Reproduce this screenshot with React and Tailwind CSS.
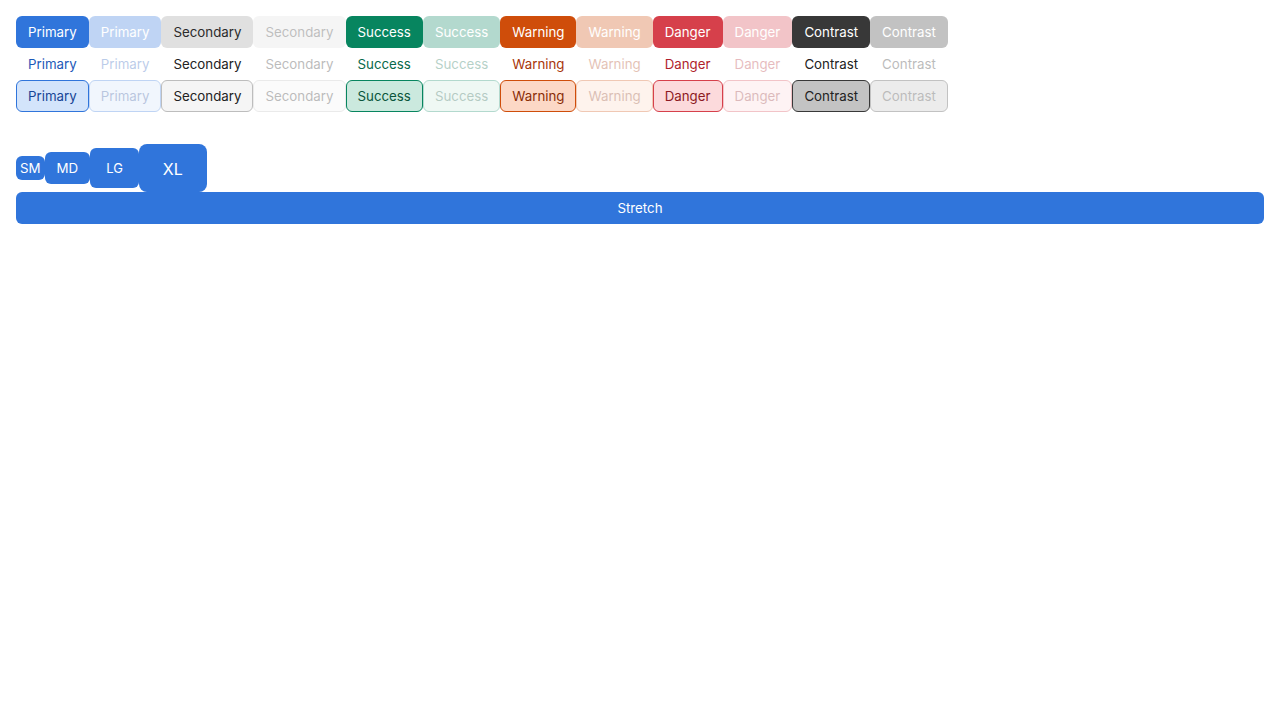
const variants = [
	{
		name: "Primary",
		solid: "bg-[#3075db] text-white",
		ghost: "text-[#1d59b8]",
		outline: "bg-[#d3e4fb] border-[#3075db] text-[#174596]",
	},
	{
		name: "Secondary",
		solid: "bg-[#e0e0e0] text-[#2b2b2b]",
		ghost: "text-[#222222]",
		outline: "bg-[#f5f5f5] border-[#bdbdbd] text-[#222222]",
	},
	{
		name: "Success",
		solid: "bg-[#07855f] text-white",
		ghost: "text-[#09694a]",
		outline: "bg-[#cbe9de] border-[#07855f] text-[#0a553b]",
	},
	{
		name: "Warning",
		solid: "bg-[#cf4d0a] text-white",
		ghost: "text-[#a8360a]",
		outline: "bg-[#fcd8c6] border-[#cf4d0a] text-[#892d06]",
	},
	{
		name: "Danger",
		solid: "bg-[#d6404b] text-white",
		ghost: "text-[#b01f2d]",
		outline: "bg-[#fcdadc] border-[#d6404b] text-[#8d1a24]",
	},
	{
		name: "Contrast",
		solid: "bg-[#383838] text-white",
		ghost: "text-[#222222]",
		outline: "bg-[#c3c3c3] border-[#383838] text-[#222222]",
	},
];

function Btn({ className, disabled, children }) {
	return (
		<button
			className={`h-8 px-[11px] pt-px border rounded-md text-[13.3px] whitespace-nowrap ${className} ${disabled ? "opacity-30" : ""}`}
		>
			{children}
		</button>
	);
}

function Row({ kind }) {
	const cls = (v) =>
		kind === "outline" ? v.outline : `border-transparent ${v[kind]}`;
	return (
		<div className="flex">
			{variants.map((v) => [
				<Btn key={v.name + "a"} className={cls(v)}>
					{v.name}
				</Btn>,
				<Btn key={v.name + "b"} disabled className={cls(v)}>
					{v.name}
				</Btn>,
			])}
		</div>
	);
}

export default function App() {
	return (
		<div
			className="p-4 bg-white min-h-screen"
			style={{ fontFamily: "Inter, 'Liberation Sans', sans-serif" }}
		>
			<Row kind="solid" />
			<Row kind="ghost" />
			<Row kind="outline" />
			<div className="flex items-center mt-8 h-12">
				<button className="h-6 px-1 pt-px rounded-md text-[13.3px] bg-[#3075db] text-white">
					SM
				</button>
				<button className="h-8 px-3 pt-px rounded-md text-[13.3px] bg-[#3075db] text-white">
					MD
				</button>
				<button className="h-10 px-4 pt-px rounded-md text-[13px] bg-[#3075db] text-white">
					LG
				</button>
				<button className="h-12 px-6 pt-px rounded-lg text-base bg-[#3075db] text-white">
					XL
				</button>
			</div>
			<button className="w-full h-8 pt-px rounded-md text-[13.3px] bg-[#3075db] text-white">
				Stretch
			</button>
		</div>
	);
}
